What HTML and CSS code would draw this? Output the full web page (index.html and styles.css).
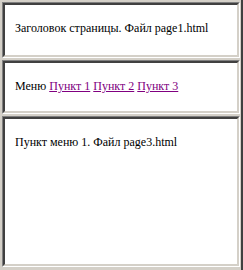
FILE: index.html
```html
<!DOCTYPE html>
<html lang="ru">
<head>
  <meta charset="UTF-8">
  <title>Фреймы</title>
  <link rel="stylesheet" href="styles.css">
</head>
<body>
  <div class="frameset">
    <div class="frame frame-top">
      <div class="frame-inner">
        <p>Заголовок страницы. Файл page1.html</p>
      </div>
    </div>
    <div class="frame frame-menu">
      <div class="frame-inner">
        <p>Меню <a href="#">Пункт 1</a> <a href="#">Пункт 2</a> <a href="#">Пункт 3</a></p>
      </div>
    </div>
    <div class="frame frame-main">
      <div class="frame-inner">
        <p>Пункт меню 1. Файл page3.html</p>
      </div>
    </div>
  </div>
</body>
</html>
```

FILE: styles.css
```css
html, body {
  height: 100%;
}

body {
  margin: 0;
  background: #d4d0c8;
  font-family: "Liberation Serif", "Times New Roman", serif;
  font-size: 12px;
  color: #000;
}

.frameset {
  box-sizing: border-box;
  height: 100%;
  padding: 2px 1px 3px 2px;
  border-right: 2px solid #404040;
  display: flex;
  flex-direction: column;
  gap: 2px;
}

.frame {
  border: 1px solid;
  border-color: #808080 #fff #fff #808080;
  box-sizing: border-box;
}

.frame-inner {
  box-sizing: border-box;
  height: 100%;
  background: #fff;
  border: 2px solid;
  border-color: #404040 #d4d0c8 #d4d0c8 #404040;
  padding: 16px 10px 0;
  line-height: 14px;
}

.frame-inner p {
  margin: 0;
  white-space: nowrap;
}

.frame-top {
  height: 56px;
}

.frame-menu {
  height: 54px;
}

.frame-main {
  flex: 1;
}

a {
  color: #800080;
}
```
